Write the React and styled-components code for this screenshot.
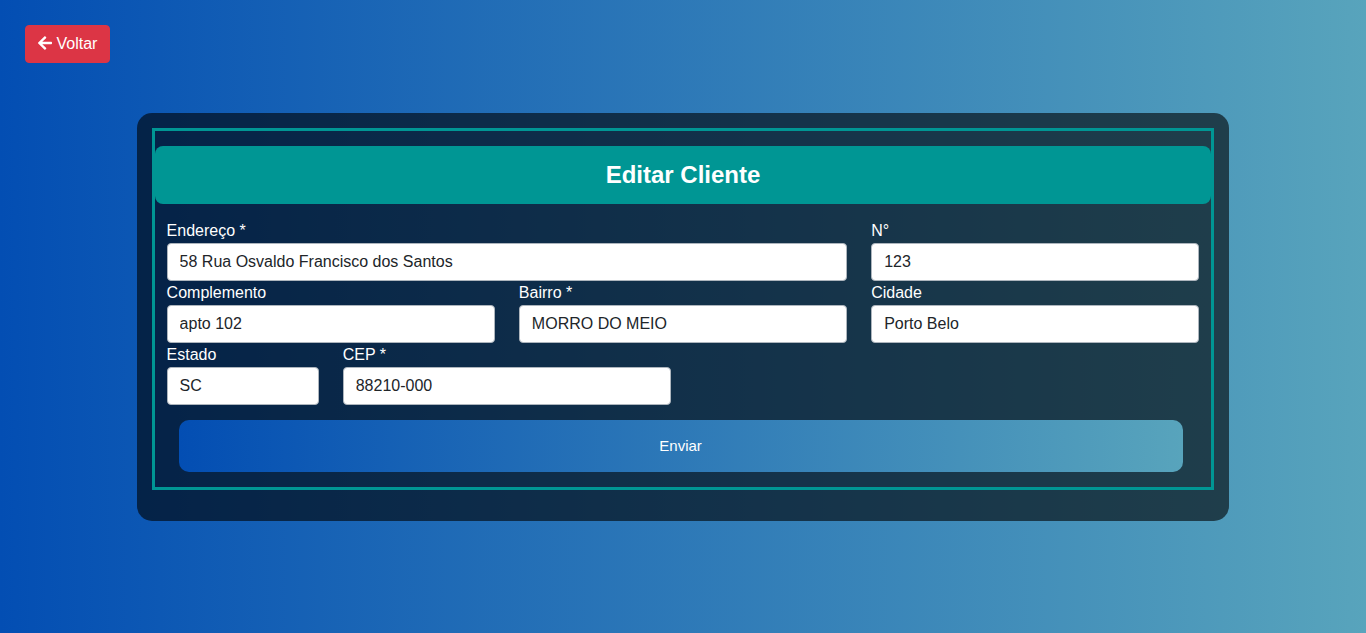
import React from 'react';
import styled, { createGlobalStyle } from 'styled-components';
import { FaArrowLeft } from 'react-icons/fa';

const gradient = 'linear-gradient(to right, #034eb3, #58a4bc)';

const GlobalStyle = createGlobalStyle`
  *, *::before, *::after { box-sizing: border-box; }
  body {
    margin: 0;
    font-family: "Liberation Sans", Arial, sans-serif;
    font-size: 16px;
    line-height: 24px;
  }
`;

const Page = styled.div`
  display: flex;
  flex-direction: column;
  gap: 50px;
  min-height: 100vh;
  padding: 25px 0;
  background: ${gradient};
`;

const BackButton = styled.button`
  align-self: flex-start;
  margin-left: 25px;
  padding: 6px 12px;
  border: 1px solid #dc3545;
  border-radius: 4px;
  background: #dc3545;
  color: #fff;
  font: inherit;
  cursor: pointer;
`;

const BackIcon = styled(FaArrowLeft)`
  width: 14px;
  height: 16px;
  vertical-align: -2px;
`;

const Card = styled.main`
  align-self: center;
  width: 80%;
  padding: 15px 15px 31px;
  border-radius: 15px;
  background: rgba(0, 0, 0, 0.6);
  color: #fff;
`;

const Form = styled.form`
  display: flex;
  flex-direction: column;
  gap: 15px;
  padding: 15px 0;
  border: 3px solid #009694;
`;

const Title = styled.h1`
  margin: 0;
  padding: 15px;
  border-radius: 8px;
  background: #009694;
  font-size: 24px;
  line-height: 28px;
  text-align: center;
`;

const Fields = styled.div`
  display: grid;
  grid-template-columns: repeat(12, minmax(0, 1fr));
`;

const Field = styled.div`
  display: flex;
  flex-direction: column;
  grid-column: span ${({ $span }) => $span};
  padding: 0 12px;
`;

const Input = styled.input`
  width: 100%;
  height: 38px;
  padding: 6px 12px;
  border: 1px solid #adb5bd;
  border-radius: 4px;
  background: #fff;
  color: #212529;
  font: inherit;
`;

const SubmitButton = styled.button`
  width: 95%;
  height: 52px;
  margin-left: 24px;
  border: 0;
  border-radius: 10px;
  background: ${gradient};
  color: #fff;
  font: inherit;
  font-size: 15px;
  cursor: pointer;
`;

const fields = [
  { id: 'endereco', label: 'Endereço *', value: '58 Rua Osvaldo Francisco dos Santos', span: 8 },
  { id: 'numero', label: 'N°', value: '123', span: 4 },
  { id: 'complemento', label: 'Complemento', value: 'apto 102', span: 4 },
  { id: 'bairro', label: 'Bairro *', value: 'MORRO DO MEIO', span: 4 },
  { id: 'cidade', label: 'Cidade', value: 'Porto Belo', span: 4 },
  { id: 'estado', label: 'Estado', value: 'SC', span: 2 },
  { id: 'cep', label: 'CEP *', value: '88210-000', span: 4 },
];

export default function App() {
  return (
    <>
      <GlobalStyle />
      <Page>
        <BackButton type="button">
          <BackIcon aria-hidden="true" /> Voltar
        </BackButton>
        <Card>
          <Form onSubmit={(event) => event.preventDefault()}>
            <Title>Editar Cliente</Title>
            <Fields>
              {fields.map(({ id, label, value, span }) => (
                <Field key={id} $span={span}>
                  <label htmlFor={id}>{label}</label>
                  <Input id={id} name={id} type="text" defaultValue={value} />
                </Field>
              ))}
            </Fields>
            <SubmitButton type="submit">Enviar</SubmitButton>
          </Form>
        </Card>
      </Page>
    </>
  );
}
